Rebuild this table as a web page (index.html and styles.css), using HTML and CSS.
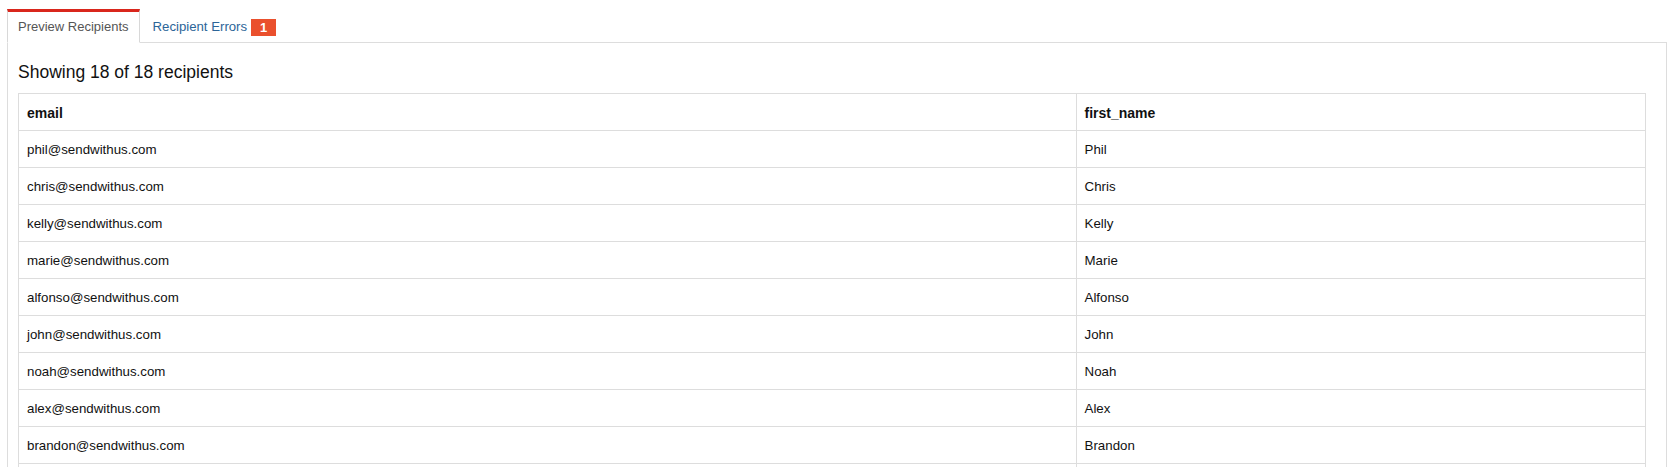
FILE: index.html
```html
<!DOCTYPE html>
<html>
<head>
<meta charset="utf-8">
<link rel="stylesheet" href="styles.css">
</head>
<body>
<div class="page">
  <ul class="tabs">
    <li class="tab active"><span class="tab-link">Preview Recipients</span></li>
    <li class="tab"><span class="tab-link link">Recipient Errors <span class="badge">1</span></span></li>
  </ul>
  <div class="panel">
    <h3 class="summary">Showing 18 of 18 recipients</h3>
    <table class="grid">
      <colgroup><col class="col-email"><col class="col-name"></colgroup>
      <thead>
        <tr><th>email</th><th>first_name</th></tr>
      </thead>
      <tbody>
        <tr><td>phil@sendwithus.com</td><td>Phil</td></tr>
        <tr><td>chris@sendwithus.com</td><td>Chris</td></tr>
        <tr><td>kelly@sendwithus.com</td><td>Kelly</td></tr>
        <tr><td>marie@sendwithus.com</td><td>Marie</td></tr>
        <tr><td>alfonso@sendwithus.com</td><td>Alfonso</td></tr>
        <tr><td>john@sendwithus.com</td><td>John</td></tr>
        <tr><td>noah@sendwithus.com</td><td>Noah</td></tr>
        <tr><td>alex@sendwithus.com</td><td>Alex</td></tr>
        <tr><td>brandon@sendwithus.com</td><td>Brandon</td></tr>
        <tr><td>matt@sendwithus.com</td><td>Matt</td></tr>
        <tr><td>sarah@sendwithus.com</td><td>Sarah</td></tr>
        <tr><td>dylan@sendwithus.com</td><td>Dylan</td></tr>
        <tr><td>emma@sendwithus.com</td><td>Emma</td></tr>
        <tr><td>james@sendwithus.com</td><td>James</td></tr>
        <tr><td>olivia@sendwithus.com</td><td>Olivia</td></tr>
        <tr><td>ryan@sendwithus.com</td><td>Ryan</td></tr>
        <tr><td>sophie@sendwithus.com</td><td>Sophie</td></tr>
        <tr><td>david@sendwithus.com</td><td>David</td></tr>
      </tbody>
    </table>
  </div>
</div>
</body>
</html>
```

FILE: styles.css
```css
* { box-sizing: border-box; }
html, body { margin: 0; padding: 0; background: #fff; }
body {
  font-family: "Liberation Sans", Arial, Helvetica, sans-serif;
  color: #111;
  font-size: 13px;
}
.page {
  padding: 9px 13px 0 7px;
}
.tabs {
  list-style: none;
  margin: 0;
  padding: 0;
  display: flex;
  align-items: flex-end;
}
.tab {
  position: relative;
  margin-bottom: -1px;
}
.tab-link {
  display: flex;
  align-items: center;
  height: 34px;
  padding: 0 10px;
  border: 1px solid transparent;
  border-top-width: 3px;
  line-height: 18px;
  font-size: 13px;
  color: #555;
}
.tab.active .tab-link {
  background: #fff;
  border-color: #d8d8d8;
  border-top-color: #d9261c;
  border-bottom-color: #fff;
}
.tab + .tab { margin-left: 2px; }
.tab-link.link {
  color: #2c6598;
  font-size: 13.2px;
  border-bottom-color: #ddd;
}
.badge {
  display: inline-block;
  margin-left: 4px;
  width: 25px;
  height: 17px;
  line-height: 17px;
  text-align: center;
  background: #ea502d;
  color: #fff;
  font-size: 13px;
  font-weight: bold;
}
.panel {
  border: 1px solid #ddd;
  padding: 19px 20px 0 10px;
}
.summary {
  margin: 0 0 11px 0;
  font-size: 17.5px;
  font-weight: normal;
  line-height: 20px;
  color: #111;
}
.grid {
  width: 100%;
  border-collapse: collapse;
  border: 1px solid #ddd;
  table-layout: fixed;
}
.col-email { width: 65%; }
.grid th, .grid td {
  border: 1px solid #ddd;
  padding: 9px 8px 7px 8px;
  line-height: 20px;
  text-align: left;
  vertical-align: top;
}
.grid th {
  font-size: 14px;
  font-weight: bold;
  color: #111;
}
.grid td {
  font-size: 13.3px;
  color: #111;
}
```
